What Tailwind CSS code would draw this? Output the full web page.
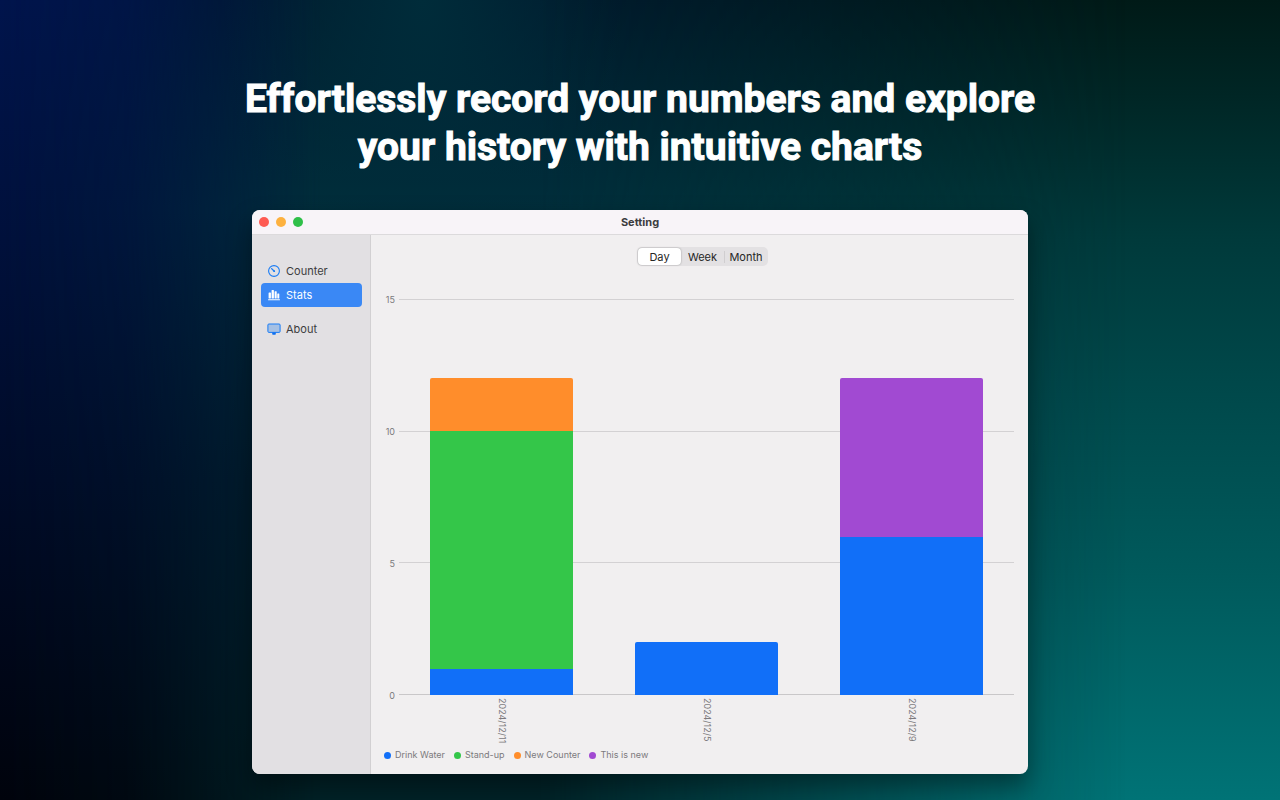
<!DOCTYPE html>
<html lang="en">
  <head>
    <meta charset="UTF-8" />
    <meta name="viewport" content="width=device-width, initial-scale=1.0" />
    <title>Setting</title>
    <script src="https://cdn.jsdelivr.net/npm/@tailwindcss/browser@4"></script>
    <style>
      /* Page backdrop: three vertical gradients blended from left to right */
      body {
        background: linear-gradient(
          180deg,
          #001a17 0%,
          #002625 12%,
          #003a3b 30%,
          #00484a 48%,
          #005a5c 72%,
          #007376 100%
        );
      }

      body::before,
      body::after {
        content: "";
        position: absolute;
        inset: 0;
        z-index: -1;
      }

      body::before {
        background:
          radial-gradient(ellipse 200px 400px at 33% 0, #002c3a 0%, #002c3a00 100%),
          linear-gradient(180deg, #001b2e 0%, #002e3b 26%, #00222e 60%, #002227 100%);
        mask-image: linear-gradient(90deg, #000 42%, transparent 88%);
      }

      body::after {
        background: linear-gradient(180deg, #00144c 0%, #00103b 30%, #000b28 60%, #00030c 100%);
        mask-image: linear-gradient(90deg, #000 0%, #000c 10%, transparent 25%);
      }

      h1 {
        -webkit-text-stroke: 1px #fff;
        stroke-linejoin: round;
      }
    </style>
  </head>
  <body
    class="relative isolate min-h-screen font-['Inter','Liberation_Sans',sans-serif] text-[#3c3c3e]"
  >
    <main class="flex min-h-screen flex-col items-center pt-[75px] pb-6">
      <h1
        class="text-center font-['Roboto','Liberation_Sans',sans-serif] text-[39px] leading-12 font-bold text-white"
      >
        Effortlessly record your numbers and explore<br />
        your history with intuitive charts
      </h1>

      <!-- App window -->
      <section
        class="mt-[39px] w-full max-w-[776px] overflow-hidden rounded-lg bg-[#f1eff0] shadow-[0_12px_24px_rgba(0,0,0,0.4)]"
      >
        <!-- Title bar -->
        <header
          class="grid h-6 grid-cols-[1fr_auto_1fr] items-center bg-[#f8f4f8] px-[7px]"
        >
          <div class="flex gap-[7px]">
            <button
              aria-label="Close"
              class="size-[10px] rounded-full bg-[#fe5a52]"
            ></button>
            <button
              aria-label="Minimize"
              class="size-[10px] rounded-full bg-[#fdb13f]"
            ></button>
            <button
              aria-label="Zoom"
              class="size-[10px] rounded-full bg-[#2fbf48]"
            ></button>
          </div>
          <h2 class="text-[11px] leading-4 font-bold">Setting</h2>
        </header>

        <div class="flex border-t border-[#dcdadc]">
          <!-- Sidebar -->
          <nav
            class="w-[119px] shrink-0 border-r border-[#d2d0d2] bg-[#e2e0e3] pt-6 pr-2 pl-[9px] text-[11px]"
          >
            <a href="#" class="flex h-6 items-center gap-[5px] rounded px-[6px]">
              <svg class="size-[14px]" viewBox="0 0 14 14" fill="none">
                <circle cx="7" cy="7" r="5.4" stroke="#1a7cf5" stroke-width="1.1" />
                <path d="M4.6 4.6 7.3 7.3" stroke="#1a7cf5" stroke-width="1.3" stroke-linecap="round" />
                <circle cx="7.2" cy="7.2" r="0.9" fill="#1a7cf5" />
              </svg>
              Counter
            </a>
            <a
              href="#"
              class="flex h-6 items-center gap-[5px] rounded bg-[#3a88f5] px-[6px] text-white"
            >
              <svg class="size-[14px]" viewBox="0 0 14 14" fill="#fff">
                <rect x="1.6" y="4.6" width="2.3" height="5.8" rx="0.5" />
                <rect x="4.6" y="2" width="2.3" height="8.4" rx="0.5" />
                <rect x="7.6" y="3.2" width="2.1" height="7.2" rx="0.5" />
                <rect x="10.3" y="5.6" width="2" height="4.8" rx="0.5" />
                <rect x="1" y="11.2" width="12" height="1" rx="0.5" />
              </svg>
              Stats
            </a>
            <a
              href="#"
              class="mt-[10px] flex h-6 items-center gap-[5px] rounded px-[6px]"
            >
              <svg class="size-[14px]" viewBox="0 0 14 14">
                <rect x="0.9" y="2" width="12.2" height="8.4" rx="1" fill="#a5c0e4" stroke="#1a7cf5" stroke-width="1" />
                <path d="M5.2 10.6h3.6v1.4q0 .7-.7.7H5.9q-.7 0-.7-.7z" fill="#0f70f0" />
              </svg>
              About
            </a>
          </nav>

          <div class="min-w-0 flex-1 pt-3 pr-[14px] pb-[11px] pl-[13px]">
            <!-- Range switch -->
            <div class="flex justify-center pl-[7px]">
              <div
                class="grid h-[19px] w-[131px] grid-cols-3 items-center rounded-[5px] bg-[#e3e1e3] p-px text-[11px] text-[#262626]"
              >
                <button
                  class="h-[17px] rounded-[4px] bg-white leading-4 shadow-[0_0_2px_rgba(0,0,0,0.35)]"
                >
                  Day
                </button>
                <button class="leading-3">Week</button>
                <button class="border-l border-[#d0ced0] leading-3">Month</button>
              </div>
            </div>

            <!-- Stacked bar chart -->
            <div class="mt-[33px] flex gap-1 text-[#7c7a7d]">
              <div
                class="-mt-[5px] -mb-[7px] flex h-[408px] w-[11px] flex-col justify-between text-right text-[9px] leading-3"
              >
                <span>15</span>
                <span>10</span>
                <span>5</span>
                <span>0</span>
              </div>
              <div class="min-w-0 flex-1">
                <div class="grid h-[396px] *:[grid-area:1/1]">
                  <div class="flex flex-col justify-between">
                    <div class="h-px bg-[#d3d1d3]"></div>
                    <div class="h-px bg-[#d3d1d3]"></div>
                    <div class="h-px bg-[#d3d1d3]"></div>
                    <div class="h-px bg-[#c9c7c9]"></div>
                  </div>
                  <div class="grid grid-cols-3 items-end justify-items-center">
                    <div class="flex h-[80%] w-[70%] flex-col overflow-hidden rounded-t-[2px]">
                      <div class="grow-2 bg-[#ff8d2b]"></div>
                      <div class="grow-9 bg-[#34c649]"></div>
                      <div class="grow bg-[#116ff8]"></div>
                    </div>
                    <div class="h-[13.33%] w-[70%] rounded-t-[2px] bg-[#116ff8]"></div>
                    <div class="flex h-[80%] w-[70%] flex-col overflow-hidden rounded-t-[2px]">
                      <div class="grow bg-[#a14ad2]"></div>
                      <div class="grow bg-[#116ff8]"></div>
                    </div>
                  </div>
                </div>
                <div
                  class="mt-[3px] grid h-12 grid-cols-3 justify-items-center text-[9px] leading-3 *:[writing-mode:vertical-rl]"
                >
                  <span>2024/12/11</span>
                  <span>2024/12/5</span>
                  <span>2024/12/9</span>
                </div>
              </div>
            </div>

            <!-- Legend -->
            <ul class="mt-px flex gap-[9px] text-[9px] leading-4 text-[#7c7a7d] *:flex *:items-center *:gap-1">
              <li><span class="size-[7px] rounded-full bg-[#116ff8]"></span>Drink Water</li>
              <li><span class="size-[7px] rounded-full bg-[#34c649]"></span>Stand-up</li>
              <li><span class="size-[7px] rounded-full bg-[#ff8d2b]"></span>New Counter</li>
              <li><span class="size-[7px] rounded-full bg-[#a14ad2]"></span>This is new</li>
            </ul>
          </div>
        </div>
      </section>
    </main>
  </body>
</html>
